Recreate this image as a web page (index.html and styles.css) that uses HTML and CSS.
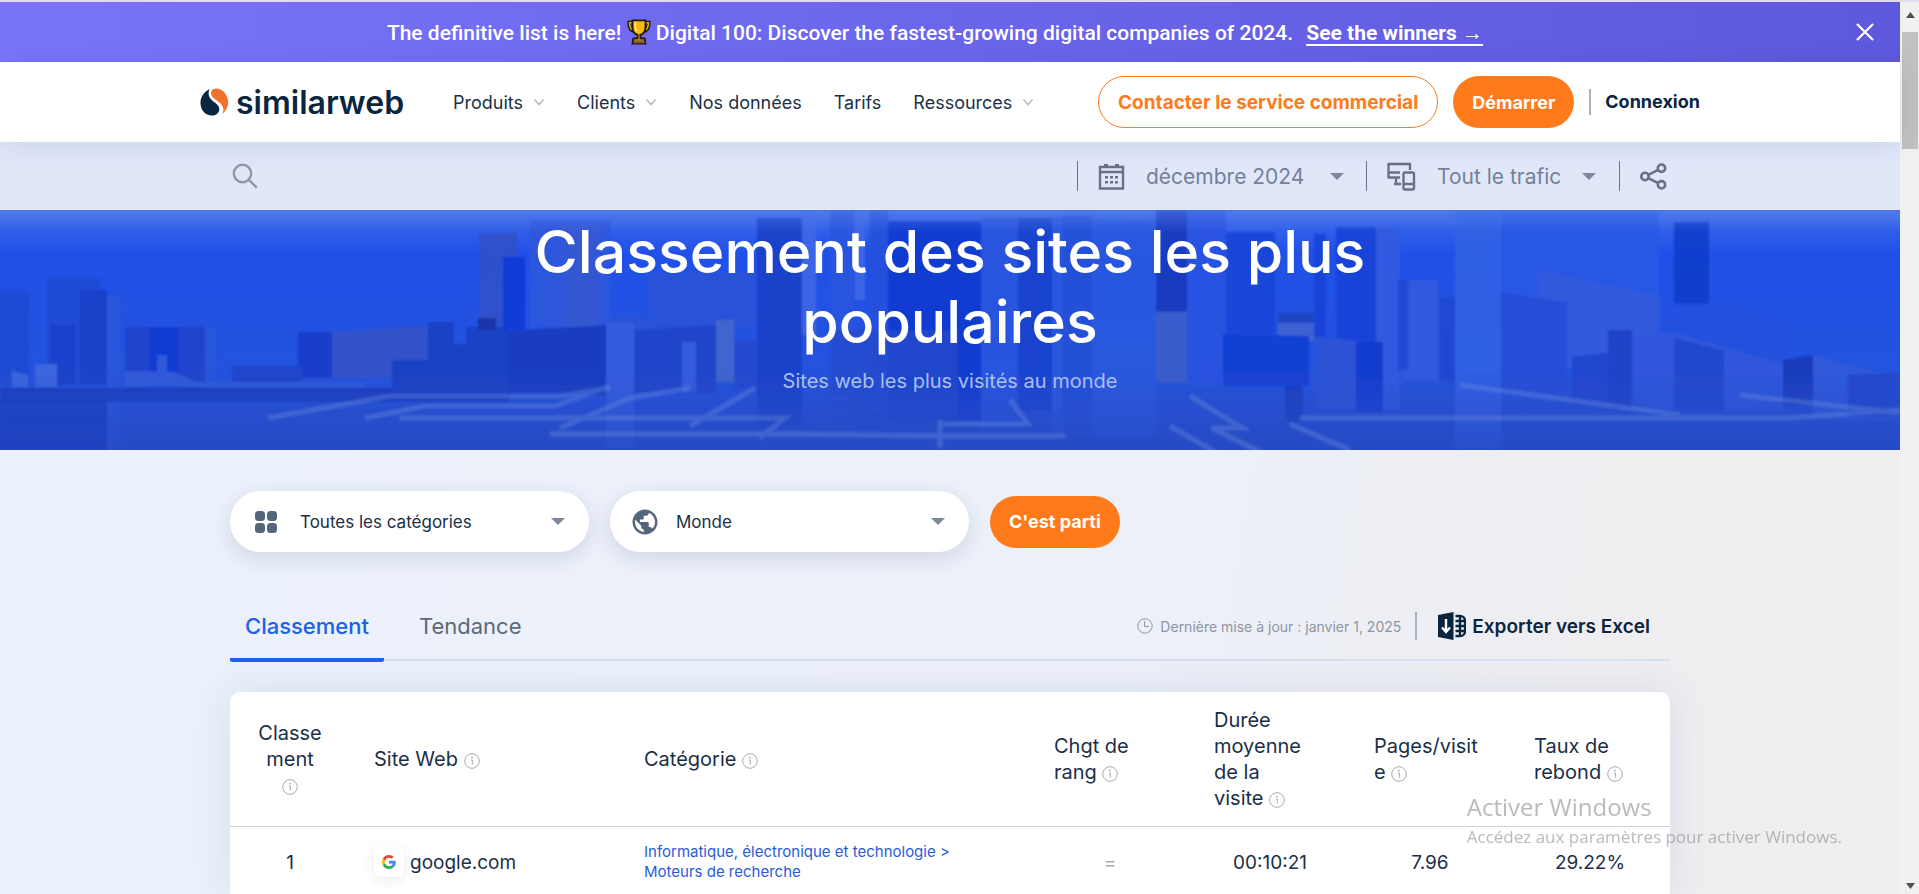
FILE: index.html
```html
<!DOCTYPE html>
<html lang="fr">
<head>
<meta charset="utf-8">
<title>Classement des sites les plus populaires | Similarweb</title>
<link rel="stylesheet" href="styles.css">
</head>
<body>
<svg width="0" height="0" class="sprite" aria-hidden="true">
  <symbol id="info" viewBox="0 0 16 16"><circle cx="8" cy="8" r="7.3" fill="none" stroke="#a4abb3"/><path d="M7 7h1.300v4.600" fill="none" stroke="#a4abb3"/><circle cx="8" cy="4.600" r=".9" fill="#a4abb3"/></symbol>
  <symbol id="chevron" viewBox="0 0 12 8"><path d="M1.500 1.500 6 6.500l4.500-5" fill="none" stroke="#b7bcc4" stroke-width="1.600"/></symbol>
  <symbol id="caret" viewBox="0 0 14 7"><path d="M0 0h14L7 7z" fill="currentColor"/></symbol>
</svg>
<div class="page">
  <div class="banner">
    <p class="banner-text">The definitive list is here!
      <svg class="trophy" viewBox="0 0 24 28" aria-label="trophée" role="img"><path d="M5 4H1.500c0 6 2 9 6 9M19 4h3.500c0 6-2 9-6 9" fill="none" stroke="#1d1a10" stroke-width="4"/><path d="M5 4H1.800c0 5 2 8 5.500 8M19 4h3.200c0 5-2 8-5.500 8" fill="none" stroke="#f5b400" stroke-width="1.600"/><path d="M5 1.500h14v7c0 5-2.500 7.500-5.500 8.500v4H18l1 5.500H5L6 21h4.500v-4C7.500 16 5 13.500 5 8.500z" fill="#f9b90a" stroke="#1d1a10" stroke-width="2"/><path d="M8 3.500v5c0 2 .8 3.500 2 4.500" fill="none" stroke="#ffe680" stroke-width="2"/><path d="M6 26h12l-.6-3H6.600z" fill="#8a5a2b"/></svg>
      Digital 100: Discover the fastest-growing digital companies of 2024. <a class="winners" href="#">See the winners →</a></p>
    <button class="close" aria-label="Fermer"><svg width="18" height="18" viewBox="0 0 18 18"><path d="m1 1 16 16M17 1 1 17" stroke="#fff" stroke-width="2.200"/></svg></button>
  </div>
  <header class="header">
    <div class="header-in">
      <a class="logo" href="#"><svg width="29" height="28" viewBox="0 0 29 28"><path d="M9.500 1C3 4.500 0 10 .6 16.500 1.200 23 6 27.500 12 27.500c4.500 0 7.500-3 7.300-6.800-.2-4.500-5.500-6-8.600-9.700C8.300 8 8 4.500 9.500 1z" fill="#092540"/><path d="M13 1.200c3-1.600 8.500-.7 12 4 4.800 6.500 4.400 14.500-2.500 21 2-6 .5-9-4-12.500C14 10.200 11.200 8.500 11 5.200c-.1-1.800.6-3.200 2-4z" fill="#f1722f"/></svg><span>similarweb</span></a>
      <nav class="nav">
        <a href="#">Produits <svg class="chev"><use href="#chevron"/></svg></a>
        <a href="#">Clients <svg class="chev"><use href="#chevron"/></svg></a>
        <a href="#">Nos données</a>
        <a href="#">Tarifs</a>
        <a href="#">Ressources <svg class="chev"><use href="#chevron"/></svg></a>
      </nav>
      <div class="actions">
        <a class="btn outline" href="#">Contacter le service commercial</a>
        <a class="btn" href="#">Démarrer</a>
        <a class="login" href="#">Connexion</a>
      </div>
    </div>
  </header>
  <div class="toolbar">
    <div class="wrap toolbar-in">
      <button class="search" aria-label="Rechercher"><svg width="26" height="26" viewBox="0 0 26 26" fill="none" stroke="#8f97a8" stroke-width="2.400"><circle cx="10.500" cy="10.500" r="8.700"/><path d="m16.800 16.800 8 7.800"/></svg></button>
      <label class="tool month"><svg width="27" height="27" viewBox="0 0 27 27"><path d="M2 4h23v21.500H2zM2 9h23" fill="none" stroke="#6a7087" stroke-width="2.400"/><path d="M6 1h4v4H6zM17 1h4v4h-4zM7 13h3v2.500H7zM12 13h3v2.500h-3zM17 13h3v2.500h-3zM7 18h3v2.500H7zM12 18h3v2.500h-3zM17 18h3v2.500h-3z" fill="#6a7087"/></svg>
        <select aria-label="Mois"><option>décembre 2024</option></select><svg class="caret"><use href="#caret"/></svg></label>
      <label class="tool traffic"><svg width="29" height="29" viewBox="0 0 29 29" fill="none" stroke="#6a7087" stroke-width="2.400" stroke-linejoin="round"><path d="M23 8V2H1.500v13.500H13M1.500 10.500H13M13 15.500H9v6.500h5M7 22h7"/><rect x="16.500" y="10.500" width="10.500" height="17" rx="1.500"/><path d="M16.500 22h10.500"/></svg>
        <select aria-label="Trafic"><option>Tout le trafic</option></select><svg class="caret"><use href="#caret"/></svg></label>
      <button class="tool share" aria-label="Partager"><svg width="27" height="27" viewBox="0 0 27 27" fill="none" stroke="#6a7087" stroke-width="2.600"><circle cx="5" cy="13.500" r="3.700"/><circle cx="21.500" cy="5.200" r="3.700"/><circle cx="21.500" cy="21.800" r="3.700"/><path d="m8.300 11.800 9.900-4.900M8.300 15.200l9.900 4.900"/></svg></button>
    </div>
  </div>
  <section class="hero">
    <svg class="city" viewBox="0 0 1900 240" preserveAspectRatio="xMidYMid slice" aria-hidden="true">
      <defs>
        <linearGradient id="sky" x2="0" y2="1"><stop offset="0" stop-color="#3f6ce8"/><stop offset=".18" stop-color="#2150e9"/><stop offset=".7" stop-color="#2453dd"/><stop offset="1" stop-color="#2449c6"/></linearGradient>
        <linearGradient id="ground" x2="0" y2="1"><stop offset="0" stop-color="#2a4fcb" stop-opacity="0"/><stop offset=".4" stop-color="#2a4fcb" stop-opacity=".35"/><stop offset="1" stop-color="#274cc4" stop-opacity=".85"/></linearGradient>
        <linearGradient id="haze" x2="0" y2="1"><stop offset="0" stop-color="#5c86ec" stop-opacity=".5"/><stop offset="1" stop-color="#5c86ec" stop-opacity="0"/></linearGradient>
        <filter id="soft"><feGaussianBlur stdDeviation="1.200"/></filter>
      </defs>
      <rect width="1900" height="240" fill="url(#sky)"/>
      <g filter="url(#soft)">
        <g opacity=".88">
        <path d="M47 68h54v107H47zM0 80h29v96H0z" fill="#204ad3"/><path d="M80 80h27v95H80zM50 115h25v60H50z" fill="#1a40c6"/><path d="M107 85h14v155h-14zM205 117h10v60h-10z" fill="#2b56da"/>
        <path d="M125 117h80v62h-80z" fill="#1d43cb"/><path d="M150 117h28v62h-28z" fill="#133bd0"/><path d="M157 145h10v32h-10z" fill="#3159d8"/>
        <path d="M0 178h510v14H0z" fill="#183bbb"/><path d="M35 154h22v23H35zM12 161l16 4v12H12z" fill="#4068df"/><path d="M125 161l50 1 20 10 170 0 0 5H125z" fill="#355cda"/>
        <path d="M298 122h34v46h-34z" fill="#153cc9"/><path d="M332 122l96-6v52h-96z" fill="#3553c8"/><path d="M232 156h70v16h-70z" fill="#1e44ca"/>
        <path d="M392 150h36v-38h26v22h12v-17h43v66H392z" fill="#1b3fc0"/><path d="M479 23h38v94h-38z" fill="#3051c9"/><path d="M503 47h22v73h-22z" fill="#103bd5"/><path d="M478 108h18v12h-18z" fill="#1834a0"/>
        <path d="M530 10h80v107h-80z" fill="#2f57db"/><path d="M562 15h36v102h-36z" fill="#3c5ac8" opacity=".6"/><path d="M508 121l98-6v70h-98z" fill="#193bbd"/><path d="M612 105h34v14h-34zM648 62h108v55H648z" fill="#2c53d6"/>
        <path d="M634 120l82-5v68h-82z" fill="#2045c8"/><path d="M606 112h28v128h-28zM682 132h14v50h-14z" fill="#365fdd"/><path d="M716 110h18v62h-18z" fill="#4468cc"/><path d="M734 130h24v50h-24z" fill="#2649cf"/>
        <path d="M757 8h45v209h-45z" fill="#1b40c7"/><path d="M802 0h14v125h-14zM855 0h10v90h-10z" fill="#3f69e5"/><path d="M830 0h24v215h-24z" fill="#2b55dd"/><path d="M870 0h18v215h-18z" fill="#2450dc"/>
        <path d="M888 11h93v200h-93z" fill="#123bce"/><path d="M830 120h128v96H830z" fill="#2348c8" opacity=".7"/><path d="M981 8h37v215h-37z" fill="#2855dd"/><path d="M1018 8h34v192h-34z" fill="#1b43cb"/><path d="M1052 7l104 4v215h-104z" fill="#2c59df"/><path d="M1062 6h30v220h-30z" fill="#2450d8"/>
        <path d="M1156 0h31v102h-31z" fill="#153bbb"/><path d="M1156 102h31v71h-31z" fill="#405fc9"/><path d="M1187 0h39v175h-39z" fill="#2854e1"/><path d="M1226 22h49v102h-49z" fill="#1946d8"/><path d="M1278 103h36v10h-36z" fill="#2145bd"/><path d="M1278 113h36v18h-36z" fill="#4266d1"/>
        <path d="M1223 124l86 2v50h-86z" fill="#143ed2"/><path d="M1314 24h12v105h-12zM1336 17h40v180h-40z" fill="#1741d7"/><path d="M1376 17h24v183h-24zM1402 70h36v100h-36z" fill="#315ce0"/><path d="M1398 70h10v90h-10zM1440 87h16v85h-16z" fill="#1d47d1"/>
        <path d="M1314 126l50 6v68h-50z" fill="#2e54d4"/><path d="M1356 132h27v70h-27z" fill="#123bcd"/><path d="M1455 0h46v240h-46z" fill="#3461e5"/><path d="M1501 0h158v125h-158z" fill="#2c59e6"/>
        <path d="M1538 60l122 26v58l-93 15-29-30z" fill="#345bdb"/><path d="M1501 82l66 11v94l-66-10z" fill="#274ed8"/><path d="M1674 12h35v82h-35z" fill="#113dca"/><path d="M1672 94l60 0 60 20v45h-120z" fill="#2551df"/>
        <path d="M1572 147l36-4v52h-36z" fill="#2145cd"/><path d="M1608 120h24v78h-24z" fill="#1d41c5"/><path d="M1632 125l42-3 110 32v48h-152z" fill="#3057dc"/><path d="M1674 128l50 13v60h-50z" fill="#2248cd"/>
        <path d="M1783 150l30-5v50h-30z" fill="#183bb9"/><path d="M1813 145l87 23v42h-87z" fill="#305ada"/><path d="M1848 165l52-2v44h-52z" fill="#2147c9"/><path d="M1285 176h18v36h-18z" fill="#173bb9"/>
        </g>
        <rect y="160" width="1900" height="80" fill="url(#ground)"/>
        <path d="M0 190h107v50H0z" fill="#183cba" opacity=".6"/>
        <g fill="none" stroke="#6f93df" stroke-width="5" opacity=".35"><path d="M268 208l122-22h170l50-8M365 208l60-12h130l55-20M560 218l70-30 60-10M690 216l65-38M400 208h385l-25 20M550 224h250l140 2h125M1010 190l18 24H940M1190 186l52 32h-30l60 30M1300 208h490l110-8M1290 214l60 26M1460 175l220 30M1740 185l160 18M1170 216l45 26M940 210v28"/></g>
      </g>
      <rect width="1900" height="22" fill="url(#haze)"/>
    </svg>
    <h1>Classement des sites les plus populaires</h1>
    <p>Sites web les plus visités au monde</p>
  </section>
  <main class="wrap main">
    <form class="filters">
      <label class="pill"><svg width="24" height="24" viewBox="0 0 24 24" fill="#56667a"><rect x="1" y="1" width="10" height="10" rx="3.500"/><rect x="13" y="1" width="10" height="10" rx="3.500"/><rect x="1" y="13" width="10" height="10" rx="3.500"/><rect x="13" y="13" width="10" height="10" rx="3.500"/></svg>
        <select class="wide" aria-label="Catégorie"><option>Toutes les catégories</option></select><svg class="caret"><use href="#caret"/></svg></label>
      <label class="pill globe"><svg width="30" height="30" viewBox="0 0 24 24" fill="#56667a"><path d="M12 2C6.480 2 2 6.480 2 12s4.480 10 10 10 10-4.480 10-10S17.520 2 12 2zm-1 17.930c-3.950-.49-7-3.850-7-7.930 0-.62.080-1.210.210-1.790L9 15v1c0 1.100.9 2 2 2v1.930zm6.900-2.540c-.26-.81-1-1.390-1.900-1.390h-1v-3c0-.55-.45-1-1-1H8v-2h2c.55 0 1-.45 1-1V7h2c1.100 0 2-.9 2-2v-.41c2.930 1.190 5 4.060 5 7.410 0 2.080-.8 3.970-2.100 5.390z"/></svg>
        <select aria-label="Pays"><option>Monde</option></select><svg class="caret"><use href="#caret"/></svg></label>
      <button class="btn" type="button">C'est parti</button>
    </form>
    <div class="tabs">
      <button class="tab active">Classement</button>
      <button class="tab">Tendance</button>
      <p class="updated"><svg width="16" height="16" viewBox="0 0 16 16" fill="none" stroke="#8d96a3"><circle cx="8" cy="8" r="7.200"/><path d="M7.500 3v5.500H12"/></svg>Dernière mise à jour : janvier 1, 2025</p>
      <a class="export" href="#"><svg width="28" height="28" viewBox="0 0 28 28"><path d="M0 3 15.500 0v28L0 25z" fill="#092540"/><path d="M8 7v12M4 15.500 8 20l4-4.500" stroke="#fff" stroke-width="2.400" fill="none"/><path d="M17.500 4H22c3 0 5 2 5 4.500v11c0 2.500-2 4.500-5 4.500h-4.500M17.500 9H27M17.500 14H27M17.500 19H27M22 4v20" stroke="#092540" stroke-width="2.300" fill="none"/></svg>Exporter vers Excel</a>
    </div>
    <table class="rank">
      <colgroup><col class="c-rank"><col class="c-site"><col class="c-cat"><col class="c-num"><col class="c-num"><col class="c-num"><col class="c-num"></colgroup>
      <thead><tr>
        <th class="mid">Classe<br>ment<br><svg class="info"><use href="#info"/></svg></th>
        <th>Site Web <svg class="info"><use href="#info"/></svg></th>
        <th>Catégorie <svg class="info"><use href="#info"/></svg></th>
        <th>Chgt de rang <svg class="info"><use href="#info"/></svg></th>
        <th>Durée<br>moyenne<br>de la<br>visite <svg class="info"><use href="#info"/></svg></th>
        <th>Pages/visit<br>e <svg class="info"><use href="#info"/></svg></th>
        <th>Taux de rebond <svg class="info"><use href="#info"/></svg></th>
      </tr></thead>
      <tbody><tr>
        <td class="mid">1</td>
        <td><a class="site" href="#"><span class="fav"><svg width="14" height="14" viewBox="0 0 48 48"><path fill="#EA4335" d="M24 9.500c3.540 0 6.710 1.220 9.210 3.600l6.850-6.850C35.900 2.380 30.470 0 24 0 14.620 0 6.510 5.380 2.560 13.220l7.980 6.190C12.430 13.720 17.740 9.500 24 9.500z"/><path fill="#4285F4" d="M46.980 24.550c0-1.570-.15-3.090-.38-4.550H24v9.020h12.940c-.58 2.960-2.260 5.480-4.780 7.180l7.730 6c4.510-4.180 7.090-10.360 7.090-17.650z"/><path fill="#FBBC05" d="M10.530 28.590A14.500 14.500 0 0 1 9.770 24c0-1.600.27-3.140.76-4.590l-7.980-6.190A24 24 0 0 0 0 24c0 3.880.92 7.540 2.560 10.780z"/><path fill="#34A853" d="M24 48c6.480 0 11.930-2.130 15.890-5.810l-7.730-6c-2.150 1.450-4.920 2.300-8.160 2.300-6.260 0-11.570-4.220-13.470-9.910l-7.980 6.190C6.510 42.620 14.620 48 24 48z"/></svg></span>google.com</a></td>
        <td><a class="cat" href="#">Informatique, électronique et technologie &gt; Moteurs de recherche</a></td>
        <td class="mid same">=</td>
        <td class="mid">00:10:21</td>
        <td class="mid">7.96</td>
        <td class="mid">29.22%</td>
      </tr></tbody>
    </table>
  </main>
</div>
<div class="scrollbar" aria-hidden="true"><svg width="9" height="6" viewBox="0 0 9 6"><path d="M0 6h9L4.500 0z" fill="#505050"/></svg><div class="thumb"></div><svg class="down" width="9" height="6" viewBox="0 0 9 6"><path d="M0 0h9L4.500 6z" fill="#505050"/></svg></div>
<aside class="activate"><strong>Activer Windows</strong><span>Accédez aux paramètres pour activer Windows.</span></aside>
</body>
</html>
```
FILE: styles.css
```css
*{box-sizing:border-box}
body{margin:0;height:100vh;overflow:hidden;display:flex;border-top:2px solid #e3dcef;font-family:Inter,"Liberation Sans",sans-serif;font-size:18px;color:#1b2f48}
a{color:inherit;text-decoration:none}
button,select{font:inherit;color:inherit;border:0;background:none;padding:0;margin:0}
select{appearance:none;outline:0}
p,h1{margin:0}
svg{flex:none}
.sprite{position:absolute}
.page{flex:1;min-width:0;background:linear-gradient(100deg,#ebf1fb 0%,#ecf0f9 60%,#eeeef1 82%,#efeff0 100%)}
.wrap{width:76%;max-width:1440px;margin:0 auto}

.banner{display:flex;align-items:center;height:60px;padding:0 26px;background:linear-gradient(90deg,#7a74f9,#6a64ea 55%,#5e58dc)}
.banner-text{flex:1;padding-right:12px;text-align:center;color:#fff;font-family:Roboto,sans-serif;font-size:21px;font-weight:500;white-space:nowrap}
.trophy{width:24px;height:26px;vertical-align:-5px}
.winners{margin-left:8px;font-weight:700;text-decoration:underline;text-decoration-thickness:2px;text-underline-offset:4px}
.close{display:flex}

.header{position:relative;background:#fff;box-shadow:0 4px 24px rgba(30,50,110,.1)}
.header-in{width:79%;max-width:1500px;height:80px;margin:0 auto;display:flex;align-items:center}
.logo{display:flex;align-items:center;gap:7px;color:#092540;font-size:32px;font-weight:600;width:253px}
.nav{display:flex;gap:32px;white-space:nowrap}
.nav a{display:flex;align-items:center;gap:10px}
.chev{width:12px;height:8px}
.actions{display:flex;align-items:center;gap:15px;margin-left:auto;font-weight:700;white-space:nowrap}
.btn{display:flex;align-items:center;justify-content:center;height:52px;padding:0 19px;border-radius:26px;background:#ff7a1a;color:#fff;font-weight:700;font-size:18px}
.outline{background:#fff;border:1px solid #ff7a1a;color:#ff7a1a}
.actions .outline{font-size:19px}
.login{border-left:2px solid #adb3bd;padding-left:14px;line-height:26px;color:#092540}

.toolbar{background:#e0e7f9}
.toolbar-in{display:flex;align-items:center;height:68px;color:#75809a;font-size:21px}
.search{display:flex;margin:0 auto 0 2px}
.tool{display:flex;align-items:center;height:30px;border-left:1px solid #6a7087;padding-left:20px}
.month select{width:184px;margin-left:21px}
.traffic{margin-left:22px}
.traffic select{width:145px;margin-left:21px}
.share{margin-left:23px}
.caret{width:14px;height:7px;color:#7d889a}
.toolbar .search,.toolbar .share{padding-right:3px}
.traffic+.share{border-left:1px solid #6a7087}

.hero{position:relative;height:240px;padding-top:7px;text-align:center;color:#fff;overflow:hidden;background:#2352e0}
.city{position:absolute;inset:0;width:100%;height:100%}
.hero h1{position:relative;max-width:940px;margin:0 auto;font-size:59px;line-height:70px;font-weight:500}
.hero p{position:relative;margin-top:10px;font-size:20px;line-height:28px;color:#a9beee}

.main{padding-top:41px}
.filters{display:flex;align-items:center;gap:21px;font-size:17px}
.pill{display:flex;align-items:center;width:359px;height:61px;padding:0 24px;border-radius:31px;background:#fff;box-shadow:0 6px 20px rgba(40,60,90,.14)}
.pill select{flex:1;margin-left:16px}
.pill .wide{margin-left:22px}
.globe{padding-left:20px}
.tabs{display:flex;align-items:center;height:68px;margin-top:41px;border-bottom:2px solid #d9e0f0;font-size:22px}
.tab{align-self:stretch;height:69px;padding:0 15px;border-bottom:4px solid transparent;border-radius:2px;color:#5b6979}
.tab+.tab{margin-left:20px}
.active{color:#2060e8;border-color:#2060f0;font-weight:500}
.updated{display:flex;align-items:center;gap:7px;margin-left:auto;font-size:14px;color:#8d96a3}
.export{display:flex;align-items:center;gap:6px;margin:0 20px 0 14px;padding-left:21px;border-left:2px solid #adb3bd;color:#092540;font-size:19px;font-weight:600}
.rank{width:100%;margin-top:31px;table-layout:fixed;border-collapse:separate;border-spacing:0;background:#fff;border-radius:10px 10px 0 0;box-shadow:0 0 40px rgba(60,90,150,.12)}
.c-rank{width:120px}
.c-site{width:270px}
.c-num{width:160px}
.rank th{height:135px;padding:0 0 0 24px;border-bottom:1px solid #cdd3da;text-align:left;font-size:20px;line-height:26px;font-weight:400}
.rank td{height:70px;padding:0 24px;font-size:19px}
.rank th:nth-child(4),.rank th:nth-child(7){padding-right:40px}
.rank .mid{padding:0;text-align:center}
.info{width:16px;height:16px;vertical-align:-3px}
.site{display:flex;align-items:center;gap:6px}
.fav{display:flex;align-items:center;justify-content:center;width:30px;height:30px;border-radius:6px;background:#fff;box-shadow:0 3px 12px rgba(40,60,90,.1)}
.cat{display:block;font-size:15px;line-height:20px;color:#2a5bdc}
.rank .same{color:#a4abb3}

.scrollbar{width:19px;display:flex;flex-direction:column;align-items:center;gap:14px;padding:10px 1px 5px 2px;background:#f1f1f1}
.thumb{width:100%;height:117px;background:#c1c1c1}
.down{margin-top:auto}
.activate{position:fixed;right:77px;bottom:44px;display:flex;flex-direction:column;color:rgba(130,130,130,.55);font-family:"Open Sans",sans-serif;font-size:17px;line-height:26px}
.activate strong{font-weight:400;font-size:24px;line-height:34px}
```
